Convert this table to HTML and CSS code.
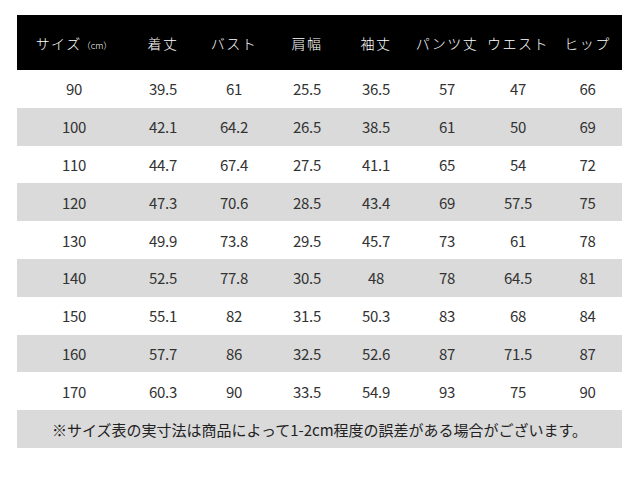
FILE: index.html
```html
<!DOCTYPE html>
<html lang="ja">
<head>
<meta charset="utf-8">
<link rel="stylesheet" href="styles.css">
</head>
<body>
<div class="page">
  <div class="table">
    <div class="row head">
      <div>サイズ<span class="unit">（cm）</span></div><div>着丈</div><div>バスト</div><div>肩幅</div><div>袖丈</div><div>パンツ丈</div><div>ウエスト</div><div>ヒップ</div>
    </div>
    <div class="row"><div>90</div><div>39.5</div><div>61</div><div>25.5</div><div>36.5</div><div>57</div><div>47</div><div>66</div></div>
    <div class="row alt"><div>100</div><div>42.1</div><div>64.2</div><div>26.5</div><div>38.5</div><div>61</div><div>50</div><div>69</div></div>
    <div class="row"><div>110</div><div>44.7</div><div>67.4</div><div>27.5</div><div>41.1</div><div>65</div><div>54</div><div>72</div></div>
    <div class="row alt"><div>120</div><div>47.3</div><div>70.6</div><div>28.5</div><div>43.4</div><div>69</div><div>57.5</div><div>75</div></div>
    <div class="row"><div>130</div><div>49.9</div><div>73.8</div><div>29.5</div><div>45.7</div><div>73</div><div>61</div><div>78</div></div>
    <div class="row alt"><div>140</div><div>52.5</div><div>77.8</div><div>30.5</div><div>48</div><div>78</div><div>64.5</div><div>81</div></div>
    <div class="row"><div>150</div><div>55.1</div><div>82</div><div>31.5</div><div>50.3</div><div>83</div><div>68</div><div>84</div></div>
    <div class="row alt"><div>160</div><div>57.7</div><div>86</div><div>32.5</div><div>52.6</div><div>87</div><div>71.5</div><div>87</div></div>
    <div class="row"><div>170</div><div>60.3</div><div>90</div><div>33.5</div><div>54.9</div><div>93</div><div>75</div><div>90</div></div>
    <div class="note">※サイズ表の実寸法は商品によって1-2cm程度の誤差がある場合がございます。</div>
  </div>
</div>
</body>
</html>
```
FILE: styles.css
```css
html, body {
  margin: 0;
  padding: 0;
  background: #ffffff;
}
.page {
  padding: 15px 18px 0 17px;
  font-family: "Noto Sans CJK JP", "Noto Sans", sans-serif;
  color: #333333;
}
.table {
  width: 605px;
}
.row {
  display: grid;
  grid-template-columns: 114px 64px 78px 68px 70px 72px 70px 69px;
  height: 37.8px;
  align-items: center;
  text-align: center;
  font-size: 15px;
  letter-spacing: -0.3px;
}
.row.alt {
  background: #dadada;
}
.row.head {
  height: 55px;
  background: #000000;
  color: #ffffff;
  font-size: 14px;
  font-weight: 300;
  letter-spacing: 1.5px;
}
.unit {
  font-size: 9px;
  letter-spacing: 0;
}
.note {
  height: 38px;
  background: #dadada;
  display: flex;
  align-items: center;
  justify-content: center;
  font-size: 15px;
  letter-spacing: 0;
  color: #222222;
}
```
